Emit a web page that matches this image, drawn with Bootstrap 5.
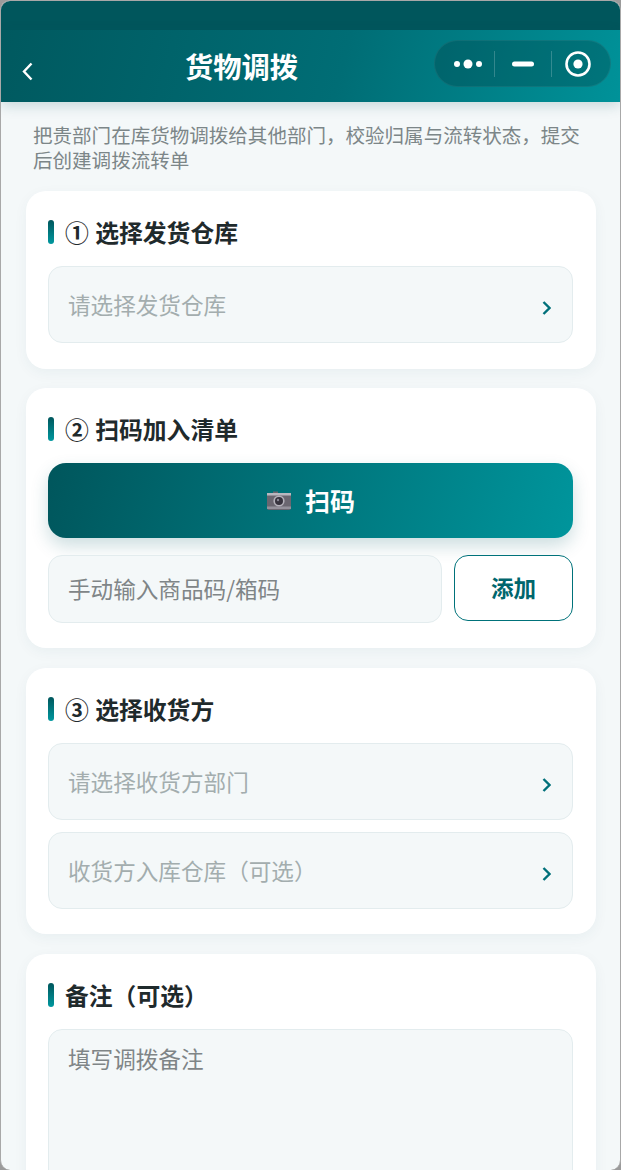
<!doctype html>
<html lang="zh">
<head>
<meta charset="utf-8">
<title>货物调拨</title>
<link href="https://cdn.jsdelivr.net/npm/bootstrap@5.3.0/dist/css/bootstrap.min.css" rel="stylesheet">
<style>
html,body{margin:0;height:1170px;overflow:hidden;background:#9b9b9b}
.frame{height:1170px;overflow:hidden;border-radius:10px;background:#f4f8f9;font-family:"Noto Sans CJK SC","Liberation Sans",sans-serif;border:1px solid #a8a8a8;border-width:1px 1px 0 1px}
.statusbar{height:29px;background:#00565c}
.topnav{height:72px;background:linear-gradient(105deg,#00595f 0%,#006d75 55%,#009299 100%);box-shadow:0 4px 12px rgba(0,80,90,.18);padding:0 9px 0 21px;position:relative}
.back{width:40px;padding-top:32px;line-height:0}
.navtitle{position:absolute;left:0;width:481px;text-align:center;top:18px;color:#fff;font-size:28.3px;font-weight:700;line-height:36px}
.capsule{width:177px;height:47px;border-radius:24px;background:rgba(0,60,65,.32);border:1px solid rgba(255,255,255,.06);margin-top:10px}
.capcell{height:100%}
.cell-a{width:59px;padding-left:6px}
.cell-b{width:56px}
.cell-c{flex:1;padding-right:7px}
.capsep{width:1px;height:26px;background:rgba(255,255,255,.2)}
.intro{color:#7c8688;font-size:19.55px;line-height:25px;padding:20px 26px 0 32px;margin:0;height:89px}
.panel{background:#fff;border-radius:20px;margin:0 24px 20px 25px;padding:21px 23px 25px 22px;box-shadow:0 4px 14px rgba(0,80,90,.05)}
section.panel:first-of-type{padding-bottom:26px;margin-bottom:19px}
.ptitle{font-size:23.8px;font-weight:700;color:#1f2a2c;line-height:40px;height:40px;gap:11px;margin-bottom:14px;word-spacing:1px}
.ptitle::before{content:"";width:6px;height:24px;border-radius:3px;background:linear-gradient(180deg,#00565c,#00989f)}
.pick{height:77px;background:#f4f8f9;border:1px solid #e3ecee;border-radius:14px;padding:0 21px 0 19px;font-size:22.6px;color:#a3adae}
.pick + .pick{margin-top:12px}
.chev{margin-top:6px}
.scanbtn{height:75px;border-radius:18px;background:linear-gradient(105deg,#00565c,#00959c);color:#fff;font-size:25px;font-weight:700;gap:13px;box-shadow:0 8px 18px rgba(0,90,100,.2);margin-bottom:17px}
.codebox{height:68px;background:#f4f8f9;border:1px solid #e3ecee;border-radius:14px;padding:0 19px;font-size:22.6px;color:#7f8587;flex:1}
.addbtn{width:119px;height:66px;border:1px solid #00727a;border-radius:14px;color:#00666d;font-size:22.6px;font-weight:700;background:#fff}
.memo{height:240px;background:#f4f8f9;border:1px solid #e3ecee;border-radius:14px;padding:12px 19px;font-size:22.6px;color:#7f8587;line-height:34px}
</style>
</head>
<body>
<div class="frame">
  <div class="statusbar"></div>
  <div class="topnav d-flex align-items-start justify-content-between">
    <div class="back"><svg width="11" height="19" viewBox="0 0 11 19"><path d="M9.500 1.500L2 9.500l7.500 8" fill="none" stroke="#fff" stroke-width="2.400"/></svg></div>
    <div class="navtitle">货物调拨</div>
    <div class="capsule d-flex align-items-center">
      <div class="capcell cell-a d-flex align-items-center justify-content-center">
        <svg width="30" height="12" viewBox="0 0 30 12"><circle cx="4" cy="6" r="3" fill="#fff"/><circle cx="15" cy="6" r="4.500" fill="#fff"/><circle cx="26" cy="6" r="3" fill="#fff"/></svg>
      </div>
      <div class="capsep"></div>
      <div class="capcell cell-b d-flex align-items-center justify-content-center">
        <svg width="22" height="6" viewBox="0 0 22 6"><rect width="22" height="5" y=".5" rx="2.500" fill="#fff"/></svg>
      </div>
      <div class="capsep"></div>
      <div class="capcell cell-c d-flex align-items-center justify-content-center">
        <svg width="26" height="26" viewBox="0 0 26 26"><circle cx="13" cy="13" r="11.500" fill="none" stroke="#fff" stroke-width="2.600"/><circle cx="13" cy="13" r="4.600" fill="#fff"/></svg>
      </div>
    </div>
  </div>
  <p class="intro">把贵部门在库货物调拨给其他部门，校验归属与流转状态，提交后创建调拨流转单</p>

  <section class="panel">
    <div class="ptitle d-flex align-items-center"><span>① 选择发货仓库</span></div>
    <div class="pick d-flex align-items-center justify-content-between"><span>请选择发货仓库</span><svg class="chev" width="9" height="14" viewBox="0 0 9 14"><path d="M1.500 1l6 6-6 6" fill="none" stroke="#00707a" stroke-width="2.400"/></svg></div>
  </section>

  <section class="panel">
    <div class="ptitle d-flex align-items-center"><span>② 扫码加入清单</span></div>
    <div class="scanbtn d-flex align-items-center justify-content-center">
      <svg width="26" height="19" viewBox="0 0 26 19"><path d="M3 2h4V.5h5V2h11a2 2 0 0 1 2 2v13a2 2 0 0 1-2 2H3a2 2 0 0 1-2-2V4a2 2 0 0 1 2-2z" fill="#6a6670"/><rect x="1" y="2" width="24" height="2.500" fill="#b9b7bf"/><rect x="1" y="15.500" width="24" height="2.500" fill="#94919b"/><circle cx="13" cy="10" r="5.600" fill="#b4b1ba"/><circle cx="13" cy="10" r="4" fill="#37333e"/><circle cx="12" cy="9" r="1.200" fill="#8a8794"/></svg>
      <span>扫码</span>
    </div>
    <div class="d-flex align-items-start gap-2">
      <div class="codebox d-flex align-items-center me-1"><span>手动输入商品码/箱码</span></div>
      <button type="button" class="addbtn btn p-0">添加</button>
    </div>
  </section>

  <section class="panel">
    <div class="ptitle d-flex align-items-center"><span>③ 选择收货方</span></div>
    <div class="pick d-flex align-items-center justify-content-between"><span>请选择收货方部门</span><svg class="chev" width="9" height="14" viewBox="0 0 9 14"><path d="M1.500 1l6 6-6 6" fill="none" stroke="#00707a" stroke-width="2.400"/></svg></div>
    <div class="pick d-flex align-items-center justify-content-between"><span>收货方入库仓库（可选）</span><svg class="chev" width="9" height="14" viewBox="0 0 9 14"><path d="M1.500 1l6 6-6 6" fill="none" stroke="#00707a" stroke-width="2.400"/></svg></div>
  </section>

  <section class="panel">
    <div class="ptitle d-flex align-items-center"><span>备注（可选）</span></div>
    <div class="memo">填写调拨备注</div>
  </section>
</div>
</body>
</html>
